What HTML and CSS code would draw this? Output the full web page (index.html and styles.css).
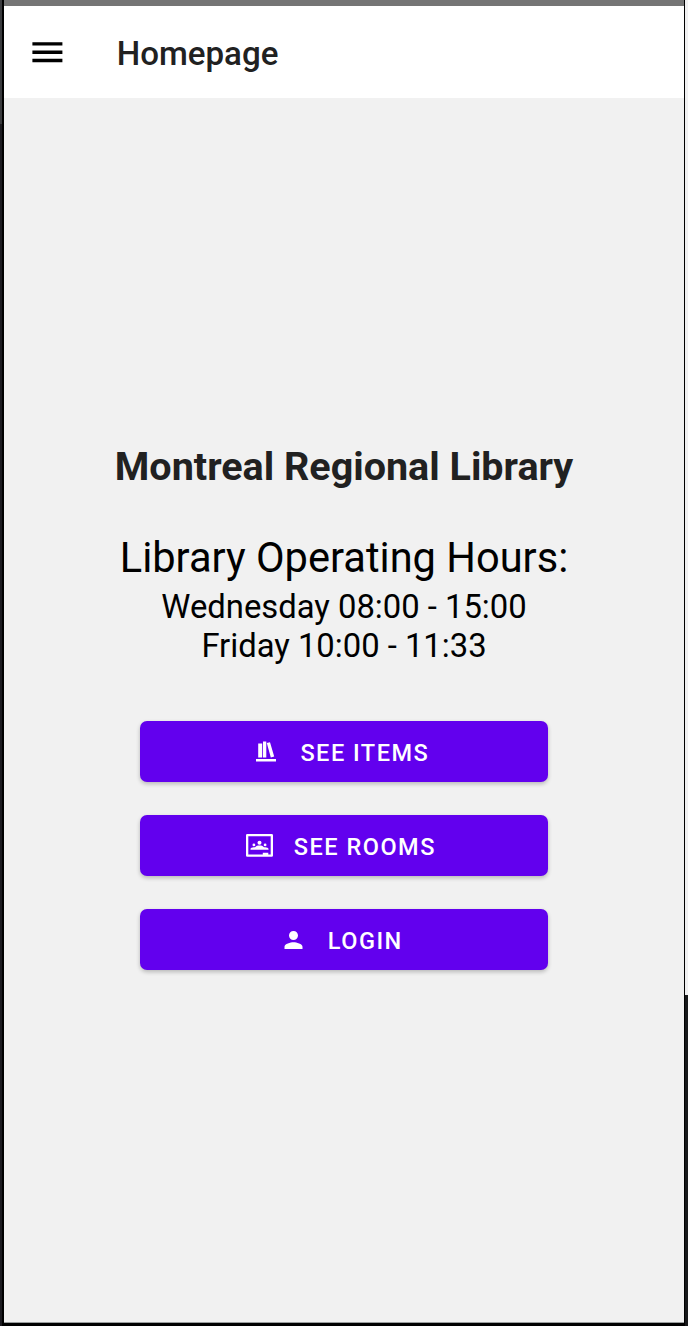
FILE: index.html
```
<!DOCTYPE html>
<html lang="en">
<head>
<meta charset="utf-8">
<title>Homepage</title>
<link rel="stylesheet" href="styles.css">
</head>
<body>
<div class="desktop">
  <div class="edge-left"></div>
  <div class="phone">
    <div class="status-bar"></div>
    <header class="app-bar">
      <svg class="menu-icon" width="31" height="21" viewBox="0 0 31 21"><path d="M.4.2h30v3.400H.4zM.4 8.500h30v3.400H.4zM.4 16.800h30v3.400H.4z"/></svg>
      <span class="title">Homepage</span>
    </header>
    <main class="content">
      <h1 class="library-name">Montreal Regional Library</h1>
      <h2 class="hours-title">Library Operating Hours:</h2>
      <p class="hours">Wednesday 08:00 - 15:00</p>
      <p class="hours">Friday 10:00 - 11:33</p>
      <div class="actions">
        <button class="action items">
          <svg class="icon" width="20" height="21" viewBox="0 0 20 21"><path d="M2.2 2.500h4v14H2.200zM7 .6h3.300v15.900H7zM10.800 2.100l3.200-.9 4.200 14.300-3.400 1.100zM0 18h20v2.500H0z"/></svg>
          <span>SEE ITEMS</span>
        </button>
        <button class="action rooms">
          <svg class="icon" width="27" height="23" viewBox="0 0 27 23"><path fill-rule="evenodd" d="M1.3 0h24.4Q27 0 27 1.3v20.2q0 1.3-1.3 1.3H1.3Q0 22.8 0 21.500V1.300Q0 0 1.300 0zM2.300 2.300v18.200H16.800v-1.800h5.500v1.800h2.400V2.300z"/><circle cx="13.5" cy="8.800" r="2"/><circle cx="7.900" cy="10.900" r="1.400"/><circle cx="19.100" cy="10.900" r="1.400"/><path d="M4.500 15.800v-.8c0-1.300 2.400-2.100 4.500-1.700 1-1.300 2.700-1.700 4.500-1.700s3.500.4 4.500 1.700c2.100-.4 4.500.4 4.500 1.700v.8z"/></svg>
          <span>SEE ROOMS</span>
        </button>
        <button class="action login">
          <svg class="icon" width="19" height="18" viewBox="3.600 4 16.800 16"><path d="M12 12c2.210 0 4-1.790 4-4s-1.790-4-4-4-4 1.790-4 4 1.790 4 4 4zm0 2c-2.670 0-8 1.340-8 4v2h16v-2c0-2.660-5.330-4-8-4z"/></svg>
          <span>LOGIN</span>
        </button>
      </div>
    </main>
    <div class="bottom-edge"></div>
  </div>
  <div class="edge-right"><div class="edge-light"></div></div>
</div>
</body>
</html>
```
FILE: styles.css
```
* { box-sizing: border-box; }
body { margin: 0; font-family: Roboto, sans-serif; }
.desktop { display: flex; height: 1326px; background: #000; overflow: hidden; }
.edge-left { width: 4px; background: linear-gradient(#3a3b3e, #3a3b3e) 0 0 / 2px 124px no-repeat, linear-gradient(#1c1b20, #1c1b20) 0 0 / 2px 100% no-repeat #000; }
.phone { width: 680px; display: flex; flex-direction: column; background: #f1f1f1; }
.status-bar { height: 6px; background: #757575; }
.app-bar { height: 92px; display: flex; align-items: center; padding: 0 0 0 28px; background: #fff; }
.menu-icon { display: block; }
.title { margin-left: 53.700px; padding-top: 4px; font-size: 33.100px; font-weight: 500; line-height: 40px; color: #212121; }
.content { flex: 1; display: flex; flex-direction: column; align-items: center; padding-top: 343px; }
.library-name, .hours-title, .hours { margin: 0; white-space: nowrap; }
.library-name { font-size: 39.500px; line-height: 52px; font-weight: 700; color: #212121; }
.hours-title { margin-top: 40px; font-size: 41.600px; line-height: 50px; font-weight: 400; color: #000; }
.hours { font-size: 32.800px; line-height: 39px; color: #000; }
.hours-title + .hours { margin-top: 5px; }
.actions { display: flex; flex-direction: column; gap: 33px; margin-top: 55px; }
.action { display: flex; align-items: center; width: 408px; height: 61px; border: 0; border-radius: 7px; background: #6200ee; color: #fff; font: 500 23.500px/28px Roboto, sans-serif; letter-spacing: 1.500px; white-space: nowrap; box-shadow: 0 2px 4px rgba(0,0,0,.24); }
.action span { padding-top: 2px; }
.icon { display: block; fill: #fff; flex: none; }
.items { padding: 0 0 0 116px; }
.items span { margin-left: 24.400px; }
.rooms { padding: 0 0 0 106px; }
.rooms span { margin-left: 20.800px; }
.login { padding: 0 0 0 144px; }
.login span { margin-left: 24.800px; }
.bottom-edge { height: 4px; background: #000; border-top: 1px solid #9a9e9e; }
.edge-right { width: 4px; border-left: 1px solid #000; background: #17181a; }
.edge-light { height: 995px; background: #f0f0f1; }
```
